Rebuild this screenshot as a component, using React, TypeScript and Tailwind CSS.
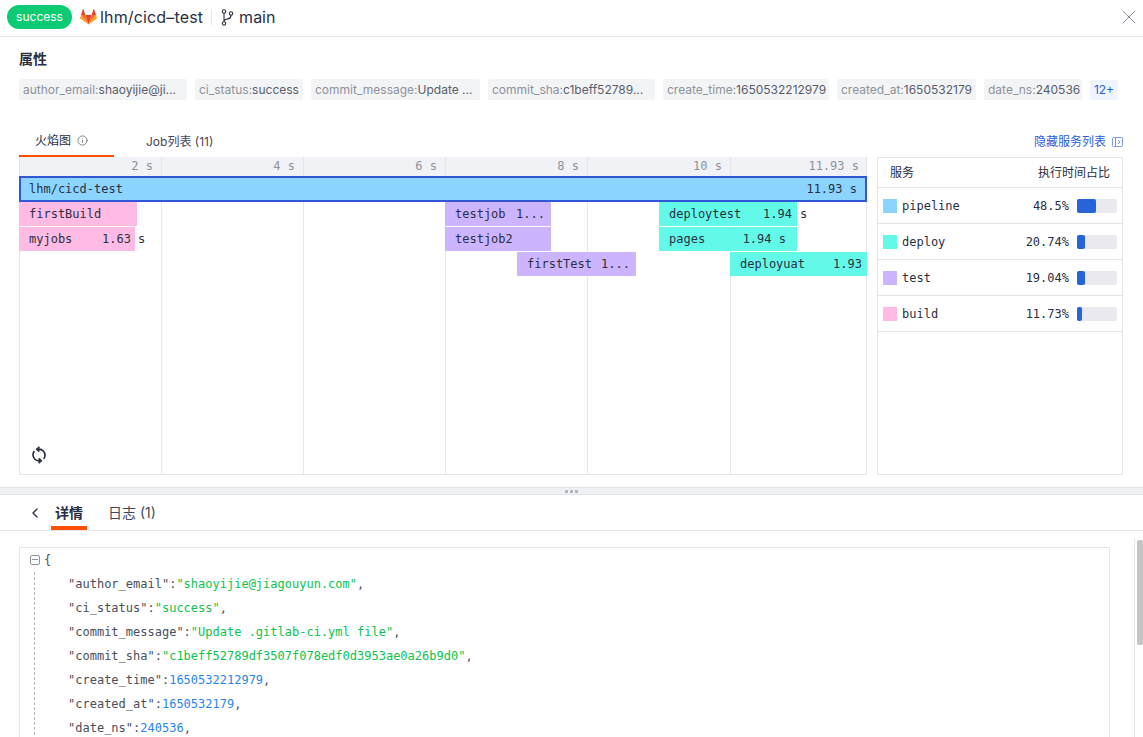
import { ChevronLeft, Info, X } from "lucide-react"

const sans = "font-['Inter','Noto_Sans_CJK_SC',sans-serif]"
const mono = "font-['DejaVu_Sans_Mono','Noto_Sans_CJK_SC',monospace]"

const tags = [
  { k: "author_email:", v: "shaoyijie@ji...", w: "w-[168px]" },
  { k: "ci_status:", v: "success", w: "w-[108px]" },
  { k: "commit_message:", v: "Update ...", w: "w-[169px]" },
  { k: "commit_sha:", v: "c1beff52789...", w: "w-[167px]" },
  { k: "create_time:", v: "1650532212979", w: "w-[166px]" },
  { k: "created_at:", v: "1650532179", w: "w-[139px]" },
  { k: "date_ns:", v: "240536", w: "w-[98px]" },
]

const ticks = [
  { w: "w-[142px]", label: "2 s" },
  { w: "w-[142px]", label: "4 s" },
  { w: "w-[142px]", label: "6 s" },
  { w: "w-[142px]", label: "8 s" },
  { w: "w-[143px]", label: "10 s" },
  { w: "flex-1", label: "11.93 s" },
]

const bars = [
  { cls: "-left-px top-[45px] w-[118px] bg-[#ffbbe3] pr-[5px]", name: "firstBuild" },
  { cls: "-left-px top-[70px] w-[116px] bg-[#ffbbe3] pr-[4px]", name: "myjobs", time: "1.63", tail: "s" },
  { cls: "left-[425px] top-[45px] w-[106px] bg-[#cdb4ff] pr-[6px]", name: "testjob", time: "1..." },
  { cls: "left-[425px] top-[70px] w-[106px] bg-[#cdb4ff] pr-[6px]", name: "testjob2" },
  { cls: "left-[497px] top-[95px] w-[119px] bg-[#cdb4ff] pr-[6px]", name: "firstTest", time: "1..." },
  { cls: "left-[639px] top-[45px] w-[138px] bg-[#62f9e8] pr-[5px]", name: "deploytest", time: "1.94", tail: "s" },
  { cls: "left-[639px] top-[70px] w-[138px] bg-[#62f9e8] pr-[11px]", name: "pages", time: "1.94 s" },
  { cls: "left-[710px] top-[95px] w-[137px] bg-[#62f9e8] pr-[5px]", name: "deployuat", time: "1.93" },
]

const services = [
  { name: "pipeline", pct: "48.5%", color: "bg-[#8ad4ff]", fill: "w-[19px]" },
  { name: "deploy", pct: "20.74%", color: "bg-[#62f9e8]", fill: "w-[8px]" },
  { name: "test", pct: "19.04%", color: "bg-[#cdb4ff]", fill: "w-[8px]" },
  { name: "build", pct: "11.73%", color: "bg-[#ffbbe3]", fill: "w-[5px]" },
]

const jsonRows = [
  { k: "author_email", v: "\"shaoyijie@jiagouyun.com\"", str: true },
  { k: "ci_status", v: "\"success\"", str: true },
  { k: "commit_message", v: "\"Update .gitlab-ci.yml file\"", str: true },
  { k: "commit_sha", v: "\"c1beff52789df3507f078edf0d3953ae0a26b9d0\"", str: true },
  { k: "create_time", v: "1650532212979", str: false },
  { k: "created_at", v: "1650532179", str: false },
  { k: "date_ns", v: "240536", str: false },
]

function GitlabLogo() {
  return (
    <svg width="17" height="16" viewBox="0 0 17 16">
      <path d="M8.5 15.6 11.6 6H5.4z" fill="#e24329" />
      <path d="M8.5 15.6 5.4 6H1z" fill="#fc6d26" />
      <path d="M1 6 .1 8.9c-.1.3 0 .6.3.8l8.1 5.9z" fill="#fca326" />
      <path d="M1 6h4.4L3.5.3c-.1-.3-.5-.3-.6 0z" fill="#e24329" />
      <path d="M8.5 15.6 11.6 6H16z" fill="#fc6d26" />
      <path d="m16 6 .9 2.9c.1.3 0 .6-.3.8l-8.1 5.9z" fill="#fca326" />
      <path d="M16 6h-4.4L13.5.3c.1-.3.5-.3.6 0z" fill="#e24329" />
    </svg>
  )
}

function BranchIcon() {
  return (
    <svg width="13" height="17" viewBox="0 0 13 17" fill="none" stroke="#2a3042" strokeWidth="1.1">
      <circle cx="3" cy="2.5" r="1.7" />
      <circle cx="3" cy="14.5" r="1.7" />
      <circle cx="10" cy="4.5" r="1.7" />
      <path d="M3 4.2v8.6M10 6.2c0 2.6-1 3.4-3 3.7-2 .3-4 .6-4 2.2" />
    </svg>
  )
}

function SyncIcon() {
  return (
    <svg width="16" height="18" viewBox="0 0 16 18" fill="none" stroke="#2a3042" strokeWidth="1.7">
      <path d="M7 3.2h1.2A6 6 0 0 1 14 9.2a6 6 0 0 1-1.3 3.7" />
      <path d="M9 14.8H7.8A6 6 0 0 1 2 8.8a6 6 0 0 1 1.3-3.7" />
      <path d="M8.4.9 5.8 3.2l2.6 2.3M7.6 12.5l2.6 2.3-2.6 2.3" />
    </svg>
  )
}

export default function App() {
  return (
    <div className={`relative flex h-[737px] w-[1143px] flex-col overflow-hidden bg-white text-[#2a3042] ${sans}`}>
      {/* header */}
      <div className="flex h-[37px] shrink-0 items-center border-b border-[#e3e5ec] pb-[2px] pl-[7px] pr-[2px]">
        <span className="flex h-[24px] w-[65px] items-center justify-center rounded-full bg-[#0ccb72] text-[12px] text-white">
          success
        </span>
        <span className="ml-[8px]"><GitlabLogo /></span>
        <span className="ml-[3px] text-[16px] leading-none tracking-[0.15px]">lhm/cicd–test</span>
        <span className="ml-[8px] h-[16px] w-px bg-[#e3e5ec]" />
        <span className="ml-[9px]"><BranchIcon /></span>
        <span className="ml-[5px] text-[16px] leading-none">main</span>
        <X size={24} strokeWidth={1} className="ml-auto text-[#8a8f9c]" />
      </div>

      {/* attributes */}
      <div className="h-[92px] shrink-0 px-[19px]">
        <div className="mt-[13px] text-[14px] font-semibold leading-[18px]">属性</div>
        <div className="mt-[11px] flex items-center gap-[8px]">
          {tags.map((t) => (
            <span
              key={t.k}
              className={`flex h-[21px] items-center rounded-[2px] bg-[#f3f4f6] pl-[4px] text-[12px] whitespace-nowrap ${t.w}`}
            >
              <span className="text-[#8e919c]">{t.k}</span>
              <span className="text-[#595d6a]">{t.v}</span>
            </span>
          ))}
          <span className="flex h-[20px] w-[28px] items-center justify-center rounded-[2px] bg-[#eef5ff] text-[12px] text-[#2b5fd9]">
            12+
          </span>
        </div>
      </div>

      {/* tabs */}
      <div className="flex h-[28px] shrink-0 items-start pl-[19px] pr-[20px]">
        <div className="flex h-[28px] w-[95px] items-center border-b-2 border-[#ff4f00] pl-[16px] pb-[3px] text-[12px]">
          火焰图
          <Info size={11} strokeWidth={1.5} className="ml-[6px] text-[#555]" />
        </div>
        <div className="flex h-[26px] items-center pl-[32px] text-[12px] text-[#43485a]">Job列表 (11)</div>
        <div className="ml-auto flex h-[26px] items-center text-[12px] text-[#2b5fd9]">
          隐藏服务列表
          <svg width="11" height="10" viewBox="0 0 11 10" fill="none" stroke="#7d9be3" className="ml-[6px]">
            <rect x=".5" y=".5" width="10" height="9" rx="1" />
            <path d="M3.5.5v9M6 3l2 2-2 2" />
          </svg>
        </div>
      </div>

      {/* flame chart + services */}
      <div className="flex h-[318px] shrink-0 items-start pl-[19px]">
        <div className="relative h-[318px] w-[848px] border-x border-b border-[#e3e5ec]">
          <div className={`flex h-[19px] bg-[#f1f2f5] text-[12px] leading-[19px] text-[#8e919c] ${mono}`}>
            {ticks.map((t) => (
              <div key={t.label} className={`${t.w} border-r border-[#e3e5ec] pr-[8px] text-right last:border-r-0 last:pr-[7px]`}>
                {t.label}
              </div>
            ))}
          </div>
          <div className="absolute inset-x-0 top-[19px] bottom-0 flex">
            {ticks.map((t) => (
              <div key={t.label} className={`${t.w} border-r border-[#e6e7ec] last:border-r-0`} />
            ))}
          </div>

          <div className={`absolute -left-px -right-px top-[19px] flex h-[26px] items-center justify-between border-2 border-[#3156d8] bg-[#8ad4ff] pl-[8px] pr-[8px] text-[12px] text-[#2a3042] ${mono}`}>
            <span>lhm/cicd-test</span>
            <span>11.93 s</span>
          </div>
          {bars.map((b) => (
            <div
              key={b.name}
              className={`absolute flex h-[24px] items-center justify-between pl-[10px] text-[12px] text-[#2a3042] whitespace-nowrap ${mono} ${b.cls}`}
            >
              <span>{b.name}</span>
              {b.time && <span>{b.time}</span>}
              {b.tail && <span className="absolute left-full ml-[3px]">{b.tail}</span>}
            </div>
          ))}

          <span className="absolute left-[11px] top-[289px]"><SyncIcon /></span>
        </div>

        <div className={`ml-[10px] h-[318px] w-[246px] border border-[#e3e5ec] ${mono}`}>
          <div className={`flex h-[30px] items-center justify-between border-b border-[#e3e5ec] pl-[12px] pr-[12px] text-[12px] ${sans}`}>
            <span>服务</span>
            <span>执行时间占比</span>
          </div>
          {services.map((s) => (
            <div key={s.name} className="flex h-[36px] items-center border-b border-[#e3e5ec] pl-[5px] pr-[5px] text-[12px]">
              <span className={`h-[14px] w-[14px] ${s.color}`} />
              <span className="ml-[5px]">{s.name}</span>
              <span className="ml-auto">{s.pct}</span>
              <span className="ml-[8px] h-[14px] w-[40px] rounded-[2px] bg-[#e9e9ef]">
                <span className={`block h-[14px] rounded-[2px] bg-[#2764d8] ${s.fill}`} />
              </span>
            </div>
          ))}
        </div>
      </div>

      {/* splitter */}
      <div className="mt-[12px] flex h-[8px] shrink-0 items-center justify-center gap-[2px] border-y border-[#e3e5ec] bg-[#f0f1f5]">
        <span className="h-[3px] w-[3px] bg-[#b4b7c0]" />
        <span className="h-[3px] w-[3px] bg-[#b4b7c0]" />
        <span className="h-[3px] w-[3px] bg-[#b4b7c0]" />
      </div>

      {/* detail tabs */}
      <div className="flex h-[36px] shrink-0 items-center border-b border-[#e3e5ec] pl-[27px] text-[14px]">
        <ChevronLeft size={16} strokeWidth={2} />
        <div className="relative ml-[8px] flex h-[35px] w-[36px] items-center justify-center font-semibold">
          详情
          <span className="absolute inset-x-0 bottom-0 h-[4px] bg-[#ff4f00]" />
        </div>
        <div className="ml-[21px] text-[14px] text-[#43485a]">日志 (1)</div>
      </div>

      {/* json */}
      <div className="relative flex-1 overflow-hidden">
        <div className={`ml-[19px] mt-[16px] h-[300px] w-[1091px] border border-[#e3e5ec] text-[12px] leading-[24px] text-[#4a4e5a] ${mono}`}>
          <div className="flex h-[24px] items-center pl-[10px]">
            <span className="relative h-[10px] w-[10px] rounded-[2px] border border-[#8e919c]">
              <span className="absolute left-[1px] top-[3px] h-px w-[6px] bg-[#8e919c]" />
            </span>
            <span className="ml-[4px]">{"{"}</span>
          </div>
          <div className="ml-[14px] border-l border-dashed border-[#b4b7c0] pl-[33px]">
            {jsonRows.map((r) => (
              <div key={r.k} className="h-[24px] whitespace-nowrap">
                "{r.k}":
                <span className={r.str ? "text-[#0ec24f]" : "text-[#2b84ee]"}>{r.v}</span>,
              </div>
            ))}
          </div>
        </div>
        <div className="absolute bottom-0 right-0 top-[7px] w-[9px] border-l border-[#e3e5ec]">
          <div className="ml-[2px] mt-[2px] h-[105px] w-[6px] rounded-[2px] bg-[#c4c4c4]" />
        </div>
      </div>
    </div>
  )
}
